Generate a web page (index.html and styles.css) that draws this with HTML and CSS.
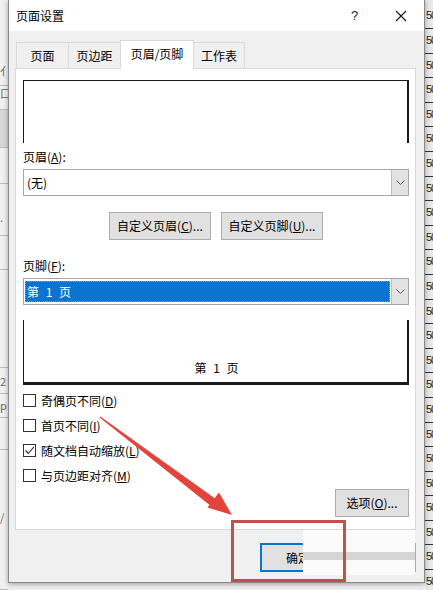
FILE: index.html
```html
<!DOCTYPE html>
<html lang="zh-CN">
<head>
<meta charset="utf-8">
<title>页面设置</title>
<link rel="stylesheet" href="styles.css">
</head>
<body>
<div class="screen">
  <div class="sheet-left">
    <div class="lcell lc1">亻</div>
    <div class="lcell lc2">口</div>
    <div class="lcell lc3"></div>
    <div class="lcell lc4"></div>
    <div class="lcell lc5">.</div>
    <div class="lcell lc6"></div>
    <div class="lcell lc7"></div>
    <div class="lcell lc8">2</div>
    <div class="lcell lc9">p</div>
    <div class="lcell lc10"></div>
    <div class="lcell lc11">/</div>
  </div>

  <div class="dialog">
    <div class="titlebar">
      <span class="title">页面设置</span>
      <div class="title-btns">
        <span class="tb help">?</span>
        <span class="tb close">
          <svg width="12" height="12" viewBox="0 0 12 12"><path d="M1 1 L11 11 M11 1 L1 11" stroke="#111" stroke-width="1.1" fill="none"/></svg>
        </span>
      </div>
    </div>

    <div class="dlg-body">
      <div class="tabs">
        <div class="tab tab-page">页面</div>
        <div class="tab tab-margin">页边距</div>
        <div class="tab tab-hf active">页眉/页脚</div>
        <div class="tab tab-sheet">工作表</div>
      </div>

      <div class="panel">
        <div class="preview preview-top"></div>

        <div class="label">页眉(<u>A</u>):</div>
        <div class="select">
          <div class="select-value">(无)</div>
          <div class="select-btn">
            <svg width="9" height="5" viewBox="0 0 9 5"><path d="M0.5 0.5 L4.5 4.5 L8.5 0.5" stroke="#555" stroke-width="1" fill="none"/></svg>
          </div>
        </div>

        <div class="btn-row">
          <div class="btn btn-custom">自定义页眉(<u>C</u>)...</div>
          <div class="btn btn-custom">自定义页脚(<u>U</u>)...</div>
        </div>

        <div class="label label-footer">页脚(<u>F</u>):</div>
        <div class="select">
          <div class="select-value focused"><span class="sel-hl">第 1 页</span></div>
          <div class="select-btn">
            <svg width="9" height="5" viewBox="0 0 9 5"><path d="M0.5 0.5 L4.5 4.5 L8.5 0.5" stroke="#555" stroke-width="1" fill="none"/></svg>
          </div>
        </div>

        <div class="preview preview-bottom"><span class="preview-text">第 1 页</span></div>

        <div class="checks">
          <div class="check-row"><span class="box"></span><span>奇偶页不同(<u>D</u>)</span></div>
          <div class="check-row"><span class="box"></span><span>首页不同(<u>I</u>)</span></div>
          <div class="check-row"><span class="box checked"><svg width="11" height="11" viewBox="0 0 11 11"><path d="M1.5 5.5 L4.3 8.5 L9.8 2" stroke="#222" stroke-width="1.1" fill="none"/></svg></span><span>随文档自动缩放(<u>L</u>)</span></div>
          <div class="check-row"><span class="box"></span><span>与页边距对齐(<u>M</u>)</span></div>
        </div>

        <div class="options-row">
          <div class="btn btn-options">选项(<u>O</u>)...</div>
        </div>
      </div>

      <div class="footer-btns">
        <div class="btn btn-ok">确定</div>
        <div class="btn btn-cancel">取消</div>
      </div>
    </div>
  </div>

  <div class="sheet-right">
    <div class="rcell first">50</div>
    <div class="rcell">50</div><div class="rcell">50</div><div class="rcell">50</div>
    <div class="rcell">50</div><div class="rcell">50</div><div class="rcell">50</div>
    <div class="rcell">50</div><div class="rcell">50</div><div class="rcell">50</div>
    <div class="rcell">50</div><div class="rcell">50</div><div class="rcell">50</div>
    <div class="rcell">50</div><div class="rcell">50</div><div class="rcell">50</div>
    <div class="rcell">50</div><div class="rcell">50</div><div class="rcell">50</div>
    <div class="rcell">50</div><div class="rcell">50</div><div class="rcell">50</div>
    <div class="rcell">50</div><div class="rcell">50</div>
  </div>

  <div class="patch"><div class="patch-bar"></div></div>
  <div class="redbox"></div>
  <svg class="arrow" width="433" height="590" viewBox="0 0 433 590">
    <polygon points="99.6,417.6 100.4,416.4 216.5,499.5 211.5,506.5" fill="#e2433a"/>
    <polygon points="232,515 207.5,507.5 219,492.5" fill="#e2433a"/>
  </svg>
</div>
</body>
</html>
```

FILE: styles.css
```css
* { box-sizing: border-box; }

html, body {
  margin: 0;
  padding: 0;
}

body {
  width: 433px;
  height: 590px;
  overflow: hidden;
  font-family: "Noto Sans CJK SC", "Noto Sans", sans-serif;
  font-size: 12px;
  color: #000;
  background: #f2f2f2;
}

u { text-decoration: underline; text-underline-offset: 1px; }

.screen {
  position: relative;
  width: 433px;
  height: 590px;
  display: flex;
  align-items: flex-start;
  background: #efefef;
}

/* ---------- background sheet (left) ---------- */
.sheet-left {
  width: 8px;
  height: 590px;
  flex: none;
  display: flex;
  flex-direction: column;
  background: #f1f1f1;
  overflow: hidden;
  color: #666;
  font-size: 11px;
}
.lcell {
  border-bottom: 1px solid #bdbdbd;
  line-height: 14px;
  white-space: nowrap;
  overflow: hidden;
}
.lc1 { height: 86px; padding-top: 64px; }
.lc2 { height: 24px; }
.lc3 { height: 38px; background: #d8d8d8; }
.lc4 { height: 36px; }
.lc5 { height: 52px; padding-top: 26px; }
.lc6 { height: 34px; }
.lc7 { height: 98px; }
.lc8 { height: 26px; padding-top: 6px; }
.lc9 { height: 24px; padding-top: 4px; }
.lc10 { height: 32px; }
.lc11 { height: 140px; padding-top: 60px; }

/* ---------- background sheet (right) ---------- */
.sheet-right {
  width: 8px;
  height: 590px;
  flex: none;
  display: flex;
  flex-direction: column;
  background: #e9e9e9;
  overflow: hidden;
  font-family: "Liberation Sans", sans-serif;
  font-size: 11px;
  color: #222;
}
.rcell {
  flex: none;
  height: 24.6px;
  line-height: 23px;
  border-bottom: 1px solid #333;
  padding-left: 1px;
  letter-spacing: -1px;
  white-space: nowrap;
  overflow: hidden;
}
.rcell.first { height: 29px; line-height: 30px; }

/* ---------- dialog ---------- */
.dialog {
  width: 417px;
  height: 583px;
  flex: none;
  display: flex;
  flex-direction: column;
  background: #f0f0f0;
  border: 1px solid #8a8a8a;
  border-top: none;
  box-shadow: 0 1px 5px rgba(0, 0, 0, 0.35);
  position: relative;
  z-index: 1;
}

.titlebar {
  height: 31px;
  flex: none;
  display: flex;
  align-items: center;
  justify-content: space-between;
  background: #fff;
  padding-left: 7px;
}
.title { font-size: 12px; line-height: 16px; }
.title-btns { display: flex; height: 31px; }
.tb {
  width: 46px;
  height: 31px;
  display: flex;
  align-items: center;
  justify-content: center;
}
.help { font-family: "Liberation Sans", sans-serif; font-size: 13px; color: #222; padding-right: 1px; }

.dlg-body {
  flex: 1;
  display: flex;
  flex-direction: column;
  padding: 9px 8px 0 6px;
}

/* ---------- tabs ---------- */
.tabs {
  height: 28px;
  display: flex;
  align-items: flex-end;
  padding-left: 1px;
  position: relative;
  z-index: 2;
}
.tab {
  height: 26px;
  border: 1px solid #d9d9d9;
  border-bottom: none;
  background: #f0f0f0;
  display: flex;
  align-items: center;
  justify-content: center;
  line-height: 16px;
  padding-top: 1px;
  margin-right: -1px;
}
.tab-page { width: 53px; }
.tab-margin { width: 53px; }
.tab-hf { width: 74px; }
.tab-sheet { width: 52px; }
.tab.active {
  height: 29px;
  margin-bottom: -1px;
  background: #fff;
  padding-top: 0;
  padding-bottom: 2px;
  position: relative;
  z-index: 3;
}

/* ---------- panel ---------- */
.panel {
  height: 462px;
  flex: none;
  background: #fff;
  border: 1px solid #d9d9d9;
  padding: 11px 6px 0 7px;
  display: flex;
  flex-direction: column;
}

.preview {
  flex: none;
  border-color: #1a1a1a;
  border-style: solid;
}
.preview-top {
  height: 63px;
  border-width: 1px 2px 0 1px;
}
.preview-bottom {
  height: 65px;
  margin-top: 15px;
  border-width: 0 2px 3px 1px;
  display: flex;
  flex-direction: column;
  justify-content: flex-end;
  align-items: center;
  padding-bottom: 6px;
}
.preview-text { line-height: 16px; word-spacing: 4px; padding-left: 2px; }

.label {
  line-height: 16px;
  padding-top: 6px;
  margin-bottom: 4px;
}
.label-footer {
  padding-top: 0;
  margin-top: 18px;
}

.select {
  height: 27px;
  flex: none;
  display: flex;
  border: 1px solid #a6a6a6;
  background: #fff;
}
.select-value {
  flex: 1;
  display: flex;
  align-items: center;
  padding-left: 3px;
  line-height: 16px;
}
.select-value.focused {
  padding: 2px 1px 2px 1px;
}
.sel-hl {
  flex: 1;
  align-self: stretch;
  display: flex;
  align-items: center;
  background: #0b74d1;
  color: #fff;
  padding-left: 2px;
  word-spacing: 4px;
  outline: 1px dotted #6aa7e0;
  outline-offset: -1px;
}
.select-btn {
  width: 17px;
  flex: none;
  background: #e3e3e3;
  border-left: 1px solid #bdbdbd;
  display: flex;
  align-items: center;
  justify-content: center;
}

.btn {
  background: #e1e1e1;
  border: 1px solid #adadad;
  display: flex;
  align-items: center;
  justify-content: center;
  line-height: 16px;
  white-space: nowrap;
}

.btn-row {
  margin-top: 16px;
  display: flex;
  justify-content: center;
  gap: 10px;
}
.btn-custom {
  width: 102px;
  height: 28px;
}

.checks {
  margin-top: 3px;
  display: flex;
  flex-direction: column;
}
.check-row {
  height: 25px;
  display: flex;
  align-items: center;
  gap: 5px;
  line-height: 16px;
}
.box {
  width: 13px;
  height: 13px;
  flex: none;
  border: 1px solid #333;
  background: #fff;
  display: flex;
  align-items: center;
  justify-content: center;
}

.options-row {
  margin-top: 1px;
  display: flex;
  justify-content: flex-end;
}
.btn-options {
  width: 74px;
  height: 28px;
}

.footer-btns {
  margin-top: 13px;
  display: flex;
  justify-content: flex-end;
  gap: 6px;
}
.btn-ok {
  width: 75px;
  height: 29px;
  border: 2px solid #0a74c9;
  padding-left: 1px;
}
.btn-cancel {
  width: 75px;
  height: 29px;
}

/* ---------- annotation overlays ---------- */
.patch {
  position: absolute;
  left: 303px;
  top: 530px;
  width: 112px;
  height: 45px;
  background: #fcfbfb;
  z-index: 5;
  display: flex;
  flex-direction: column;
  padding-top: 22px;
}
.patch-bar {
  height: 8px;
  background: #d5d5d5;
}

.redbox {
  position: absolute;
  left: 231px;
  top: 520px;
  width: 115px;
  height: 62px;
  border: 3px solid #c4504e;
  z-index: 6;
}

.arrow {
  position: absolute;
  left: 0;
  top: 0;
  z-index: 7;
  pointer-events: none;
}
```
